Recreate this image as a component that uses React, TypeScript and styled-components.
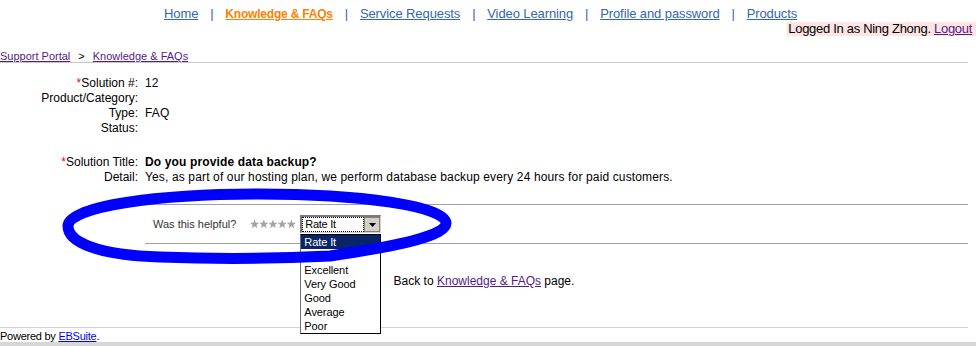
import React from 'react';
import styled, { createGlobalStyle } from 'styled-components';

const GlobalStyle = createGlobalStyle`
  html, body {
    margin: 0;
    padding: 0;
    background: #fff;
  }
  body {
    font-family: 'Liberation Sans', Arial, sans-serif;
    color: #000;
  }
`;

const Page = styled.div`
  position: relative;
  width: 976px;
  height: 346px;
  overflow: hidden;
`;

// header: nav links + logged in bar
const Header = styled.div`
  font-size: 13px;
  letter-spacing: -0.3px;
`;

const Nav = styled.nav`
  display: flex;
  align-items: baseline;
  padding: 6px 0 0 164px;
  line-height: 16px;
  white-space: nowrap;
`;

const NavLink = styled.a<{ $active?: boolean }>`
  color: ${(p) => (p.$active ? '#ff8000' : '#3366b3')};
  font-weight: ${(p) => (p.$active ? 'bold' : 'normal')};
  font-size: ${(p) => (p.$active ? '12px' : '13px')};
  letter-spacing: ${(p) => (p.$active ? '-0.2px' : '-0.1px')};
  text-decoration: underline;
  cursor: pointer;
`;

const NavSep = styled.span`
  color: #3366b3;
  margin: 0 12px;
`;

const UserBar = styled.div`
  display: flex;
  justify-content: flex-end;
  line-height: 14px;
`;

const UserInfo = styled.span`
  background: #ffe4e4;
  padding: 0 4px 0 1px;
`;

const VisitedLink = styled.a`
  color: #551a8b;
  text-decoration: underline;
  cursor: pointer;
`;

const Crumbs = styled.div`
  width: 968px;
  margin-top: 14px;
  font-size: 11px;
  line-height: 12px;
  border-bottom: 1px solid #c8c8c8;
`;

const CrumbArrow = styled.span`
  margin: 0 8px;
`;

// solution fields
const FieldGrid = styled.div<{ $top: number }>`
  display: grid;
  grid-template-columns: 138px 1fr;
  column-gap: 7px;
  margin-top: ${(p) => p.$top}px;
  font-size: 12px;
  line-height: 15px;
`;

const Label = styled.div`
  text-align: right;
  white-space: nowrap;
`;

const Req = styled.span`
  color: #ff0000;
`;

const Value = styled.div<{ $strong?: boolean }>`
  font-weight: ${(p) => (p.$strong ? 'bold' : 'normal')};
  letter-spacing: 0.14px;
  white-space: nowrap;
`;

// rating row
const RatingBar = styled.div`
  box-sizing: border-box;
  width: 823px;
  height: 40px;
  margin: 19px 0 0 145px;
  padding-left: 8px;
  display: flex;
  align-items: center;
  border-top: 1px solid #a0a0a0;
  border-bottom: 1px solid #a0a0a0;
`;

const Question = styled.span`
  font-size: 11px;
  color: #333;
  margin-right: 14px;
`;

const Stars = styled.svg`
  display: block;
  margin-right: 4px;
`;

const SelectWrap = styled.div`
  position: relative;
`;

const SelectBox = styled.div`
  box-sizing: border-box;
  width: 81px;
  height: 18px;
  display: flex;
  background: #fff;
  border-style: solid;
  border-width: 2px 1px 1px 2px;
  border-color: #7a7a7a #d4d0c8 #d4d0c8 #7a7a7a;
`;

const SelectValue = styled.div`
  flex: 1;
  border: 1px dotted #000;
  padding-left: 2px;
  font-size: 11px;
  letter-spacing: -0.3px;
  line-height: 13px;
`;

const SelectButton = styled.div`
  box-sizing: border-box;
  width: 16px;
  display: flex;
  align-items: center;
  justify-content: center;
  background: #d4d0c8;
  border: 1px solid #808080;
`;

const OptionList = styled.ul`
  position: absolute;
  z-index: 1;
  top: calc(100% + 1px);
  left: 0;
  box-sizing: border-box;
  width: 81px;
  margin: 0;
  padding: 0;
  list-style: none;
  background: #fff;
  border: 1px solid #000;
  border-left-color: #707070;
`;

const OptionItem = styled.li<{ $selected?: boolean }>`
  height: 14px;
  padding-left: 3px;
  font-size: 11px;
  letter-spacing: -0.1px;
  line-height: 14px;
  color: ${(p) => (p.$selected ? '#fff' : '#000')};
  background: ${(p) => (p.$selected ? '#0a246a' : 'transparent')};
`;

const BackNote = styled.p`
  width: 968px;
  margin: 0;
  padding: 30px 0 38px;
  text-align: center;
  font-size: 12px;
  line-height: 15px;
`;

const Footer = styled.div`
  width: 968px;
  border-top: 1px solid #d0d0d0;
  padding-top: 2px;
  font-size: 11px;
  line-height: 12px;
  letter-spacing: -0.25px;
`;

const FooterLink = styled.a`
  color: #0000ff;
  text-decoration: underline;
`;

const BottomStrip = styled.div`
  height: 4px;
  background: #d6d6d6;
`;

const Annotation = styled.svg`
  position: absolute;
  z-index: 2;
  top: 0;
  left: 0;
  pointer-events: none;
`;

const navItems = ['Home', 'Knowledge & FAQs', 'Service Requests', 'Video Learning', 'Profile and password', 'Products'];
const options = ['Rate It', '', 'Excellent', 'Very Good', 'Good', 'Average', 'Poor'];

const starPoints = (cx: number, cy: number, r: number) => {
  const pts: string[] = [];
  for (let i = 0; i < 10; i++) {
    const rad = i % 2 === 0 ? r : r * 0.42;
    const a = -Math.PI / 2 + (i * Math.PI) / 5;
    pts.push(`${(cx + rad * Math.cos(a)).toFixed(2)},${(cy + rad * Math.sin(a)).toFixed(2)}`);
  }
  return pts.join(' ');
};

const App: React.FC = () => (
  <Page>
    <GlobalStyle />
    <Header>
      <Nav>
        {navItems.map((item, i) => (
          <React.Fragment key={item}>
            {i > 0 && <NavSep>|</NavSep>}
            <NavLink $active={item === 'Knowledge & FAQs'}>{item}</NavLink>
          </React.Fragment>
        ))}
      </Nav>
      <UserBar>
        <UserInfo>
          Logged In as Ning Zhong. <VisitedLink>Logout</VisitedLink>
        </UserInfo>
      </UserBar>
    </Header>

    <Crumbs>
      <VisitedLink>Support Portal</VisitedLink>
      <CrumbArrow>&gt;</CrumbArrow>
      <VisitedLink>Knowledge &amp; FAQs</VisitedLink>
    </Crumbs>

    <FieldGrid $top={13}>
      <Label><Req>*</Req>Solution #:</Label>
      <Value>12</Value>
      <Label>Product/Category:</Label>
      <Value />
      <Label>Type:</Label>
      <Value>FAQ</Value>
      <Label>Status:</Label>
      <Value />
    </FieldGrid>
    <FieldGrid $top={19}>
      <Label><Req>*</Req>Solution Title:</Label>
      <Value $strong>Do you provide data backup?</Value>
      <Label>Detail:</Label>
      <Value>Yes, as part of our hosting plan, we perform database backup every 24 hours for paid customers.</Value>
    </FieldGrid>

    <RatingBar>
      <Question>Was this helpful?</Question>
      <Stars width="46" height="10" viewBox="0 0 46 10">
        {[0, 1, 2, 3, 4].map((i) => (
          <polygon key={i} points={starPoints(4.6 + i * 9.2, 5.3, 4.8)} fill="#a4a4a4" />
        ))}
      </Stars>
      <SelectWrap>
        <SelectBox>
          <SelectValue>Rate It</SelectValue>
          <SelectButton>
            <svg width="7" height="4" viewBox="0 0 7 4">
              <polygon points="0,0 7,0 3.5,4" fill="#000" />
            </svg>
          </SelectButton>
        </SelectBox>
        <OptionList>
          {options.map((o, i) => (
            <OptionItem key={i} $selected={i === 0}>{o}</OptionItem>
          ))}
        </OptionList>
      </SelectWrap>
    </RatingBar>

    <BackNote>
      Back to <VisitedLink>Knowledge &amp; FAQs</VisitedLink> page.
    </BackNote>

    <Footer>
      Powered by <FooterLink>EBSuite</FooterLink>.
    </Footer>
    <BottomStrip />

    {/* hand-drawn highlight around the rating control */}
    <Annotation width="976" height="346" viewBox="0 0 976 346">
      <path
        d="M 68 226 C 68 206, 160 194, 258 194 C 360 194, 446 206, 446 223 C 446 235, 405 245, 330 256 C 270 259, 210 259, 160 257 C 100 255, 68 243, 68 226 Z"
        fill="none"
        stroke="#0000ff"
        strokeWidth="11"
      />
    </Annotation>
  </Page>
);

export default App;
